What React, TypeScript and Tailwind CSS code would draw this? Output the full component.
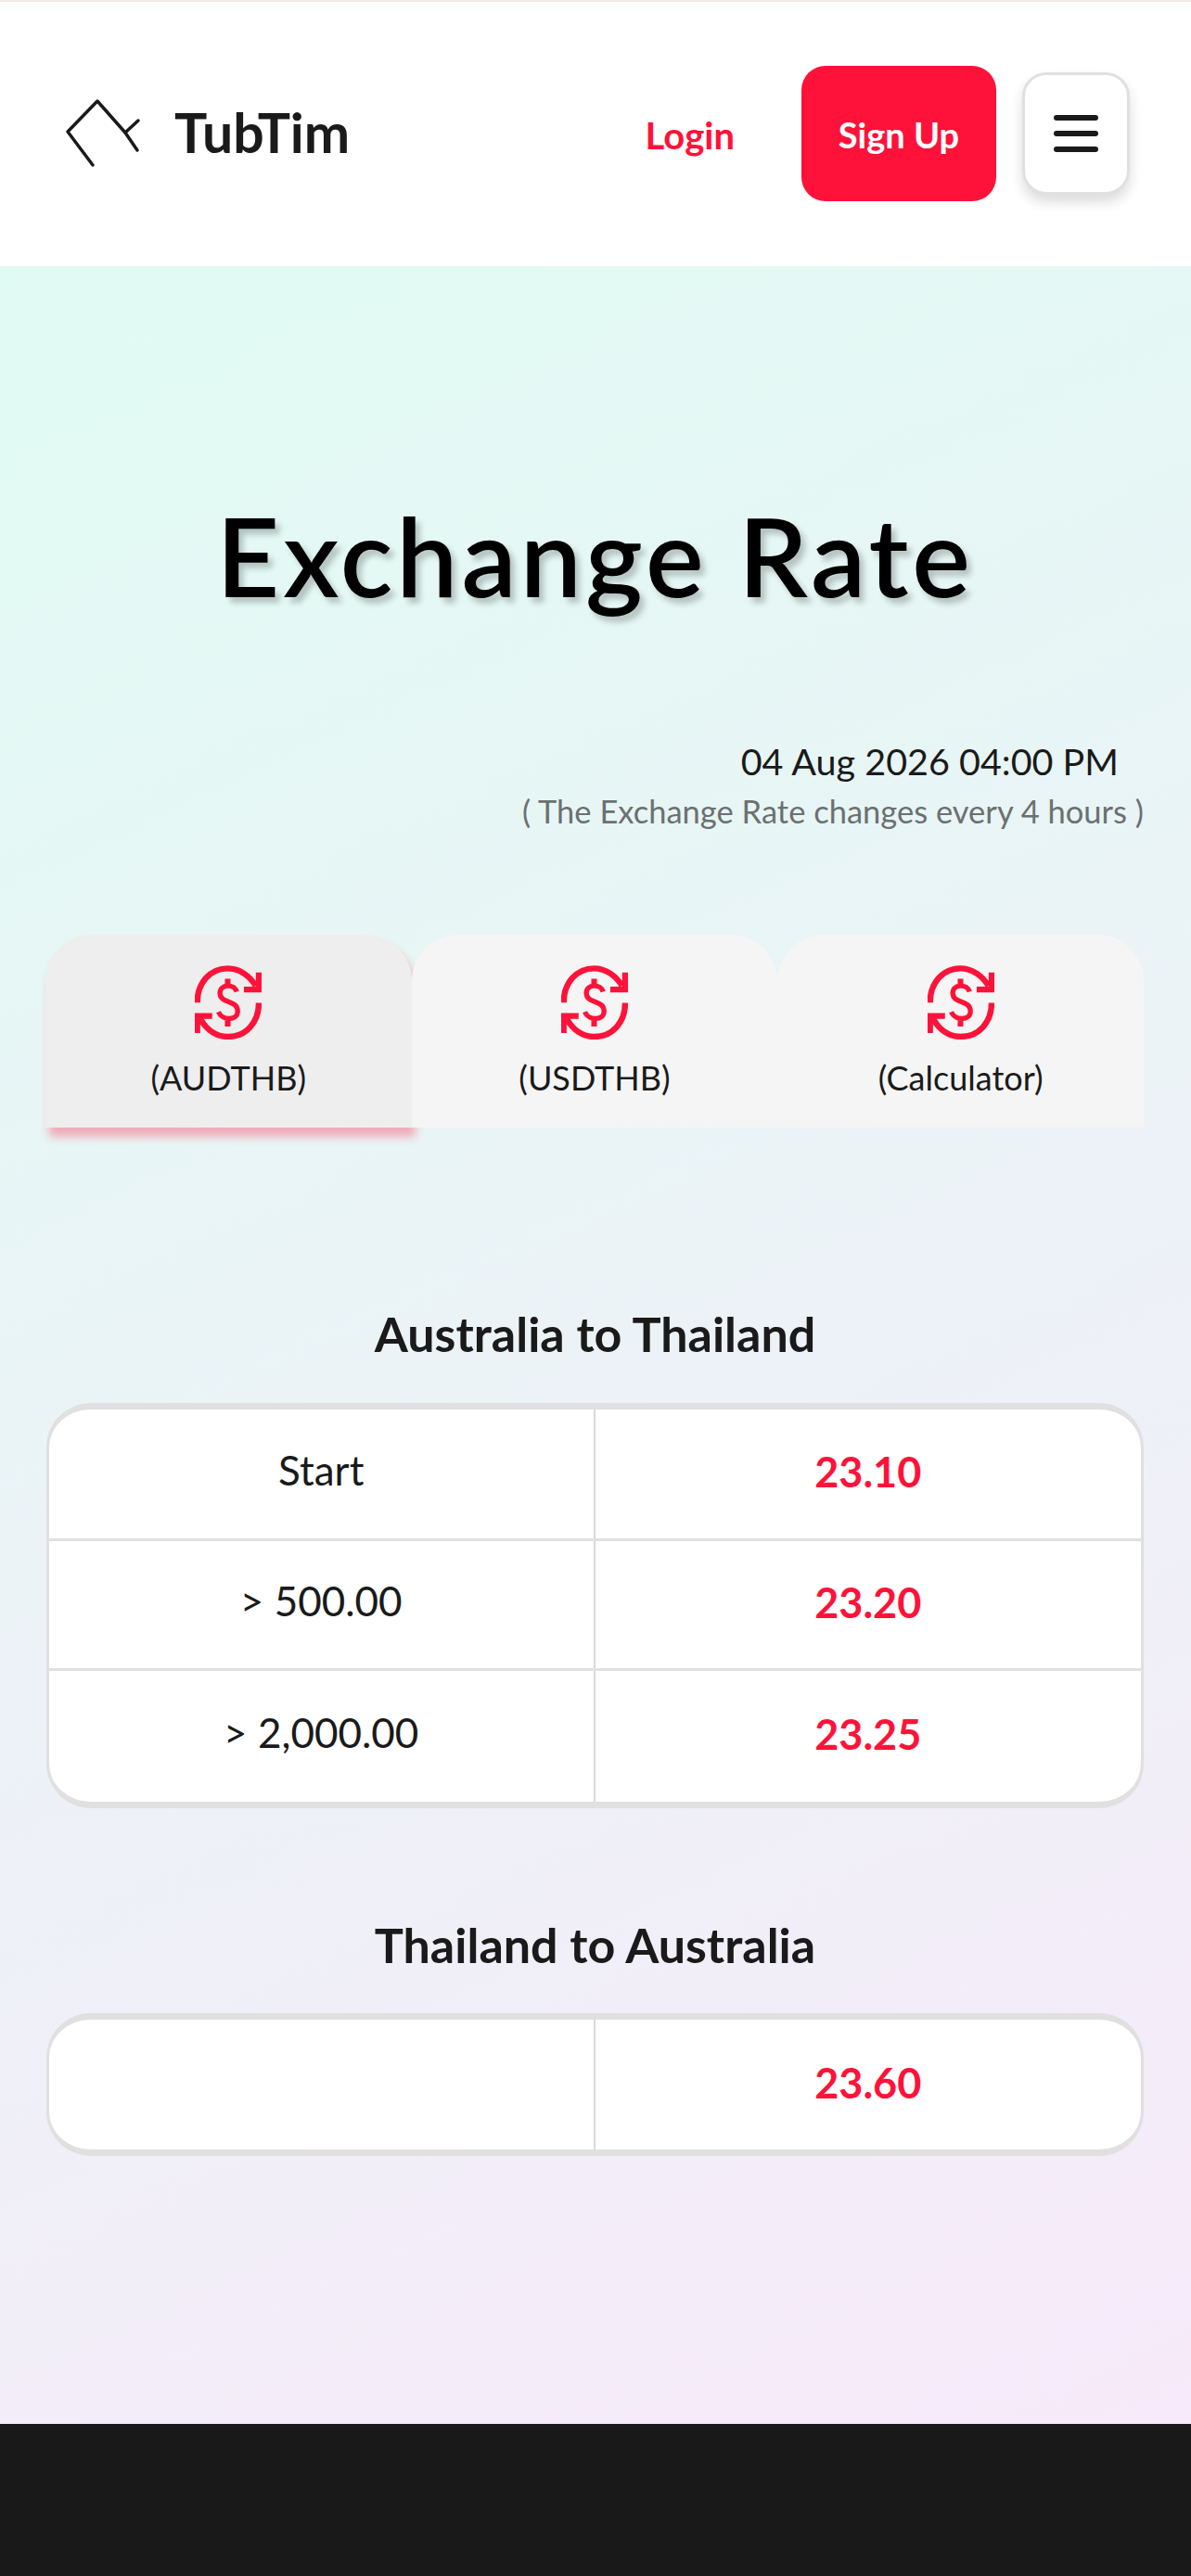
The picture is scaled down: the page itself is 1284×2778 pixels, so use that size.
const font = "font-['Lato','Liberation_Sans',sans-serif]";

function Logo() {
  return (
    <svg width="90" height="80" viewBox="0 0 90 80" fill="none" stroke="#1a1a1a" strokeWidth="3.5" strokeLinecap="round" strokeLinejoin="round">
      <path d="M35 74 L8 38 L40 5 L70 39 L84 26" />
      <path d="M70 39 L83 58" />
    </svg>
  );
}

function RateIcon() {
  return (
    <svg width="72" height="80" viewBox="62 63 215 237" fill="none" stroke="#ff1239" strokeWidth="19">
      <path d="M70 182 C70 120 110 72 168 72 C205 72 238 95 258 128" />
      <path d="M268 85 V140 H220" />
      <path d="M268 183 C268 245 228 292 168 292 C132 292 100 270 80 235" />
      <path d="M70 280 V225 H118" />
      <path strokeWidth="16" d="M197 147 C190 122 143 120 143 152 C143 186 200 172 200 210 C200 242 150 240 138 212" />
      <path strokeWidth="18" d="M168 105 V125 M168 240 V259" />
    </svg>
  );
}

function Tab({ label, active }: { label: string; active?: boolean }) {
  return (
    <div
      className={
        "flex h-[208px] flex-1 flex-col items-center rounded-t-[50px] pt-[33px] " +
        (active ? "bg-[#eeeeee] shadow-[4px_10px_10px_rgba(255,18,57,0.32)]" : "bg-[#f5f5f5]")
      }
    >
      <RateIcon />
      <span className="mt-[19px] text-[36px] leading-[44px] text-[#1a1a1a]">{label}</span>
    </div>
  );
}

function RateRow({ label, rate, height, first }: { label: string; rate: string; height: string; first?: boolean }) {
  return (
    <div className={"grid grid-cols-2 " + height + (first ? "" : " border-t-[3px] border-[#e0e0e0]")}>
      <div className="flex items-center justify-center border-r-2 border-[#d8d8d8] pb-[10px] text-[44px] text-[#1a1a1a]">
        {label}
      </div>
      <div className="flex items-center justify-center pb-[3px] text-[45px] font-bold text-[#ff1239]">{rate}</div>
    </div>
  );
}

export default function App() {
  return (
    <div className={font + " flex min-h-[2778px] w-[1284px] flex-col bg-white"}>
      <header className="flex h-[287px] shrink-0 items-center border-t-2 border-[#f1ece8] pb-[2px] pl-[65px] pr-[66px]">
        <Logo />
        <span className="ml-[33px] text-[59px] font-bold text-[#1a1a1a]">TubTim</span>
        <span className="ml-auto pt-[4px] text-[40px] font-bold text-[#ff1239]">Login</span>
        <button className="ml-[72px] flex h-[146px] w-[210px] items-center justify-center rounded-[26px] bg-[#ff1239] pt-[4px] text-[38px] font-bold text-white">
          Sign Up
        </button>
        <button className="ml-[28px] flex h-[132px] w-[116px] flex-col items-center justify-center gap-[11px] rounded-[26px] border-[3px] border-[#e0e0e0] bg-white shadow-[0_8px_14px_rgba(0,0,0,0.14)]">
          <span className="h-[6px] w-[48px] rounded-full bg-[#1a1a1a]" />
          <span className="h-[6px] w-[48px] rounded-full bg-[#1a1a1a]" />
          <span className="h-[6px] w-[48px] rounded-full bg-[#1a1a1a]" />
        </button>
      </header>

      <main className="h-[2327px] shrink-0 bg-[linear-gradient(155deg,#e0fbf3,#f7eafa)] pl-[50px] pr-[51px]">
        <h1 className="pt-[242px] text-center text-[118px] font-semibold leading-[140px] tracking-[4px] text-black [text-shadow:5px_6px_6px_rgba(0,0,0,0.22)]">
          Exchange Rate
        </h1>
        <div className="mt-[128px] pr-[27px] text-right text-[39.5px] leading-[48px] text-[#1a1a1a]">04 Aug 2026 04:00 PM</div>
        <div className="mt-[7px] text-right text-[34.5px] leading-[46px] text-[#6b7070]">( The Exchange Rate changes every 4 hours )</div>

        <div className="mt-[110px] -ml-[1px] flex">
          <Tab label="(AUDTHB)" active />
          <Tab label="(USDTHB)" />
          <Tab label="(Calculator)" />
        </div>

        <h2 className="mt-[192px] text-center text-[52px] font-bold leading-[60px] text-[#1a1a1a]">Australia to Thailand</h2>
        <div className="mt-[45px] overflow-hidden rounded-[48px] border-x-[3px] border-y-[7px] border-[#e0e0e0] bg-white">
          <RateRow label="Start" rate="23.10" height="h-[139px]" first />
          <RateRow label="> 500.00" rate="23.20" height="h-[140px]" />
          <RateRow label="> 2,000.00" rate="23.25" height="h-[144px]" />
        </div>

        <h2 className="mt-[117px] text-center text-[52px] font-bold leading-[60px] text-[#1a1a1a]">Thailand to Australia</h2>
        <div className="mt-[44px] overflow-hidden rounded-[48px] border-x-[3px] border-y-[7px] border-[#e0e0e0] bg-white">
          <RateRow label="" rate="23.60" height="h-[140px]" first />
        </div>
      </main>

      <footer className="h-[164px] shrink-0 bg-[#191919]" />
    </div>
  );
}
